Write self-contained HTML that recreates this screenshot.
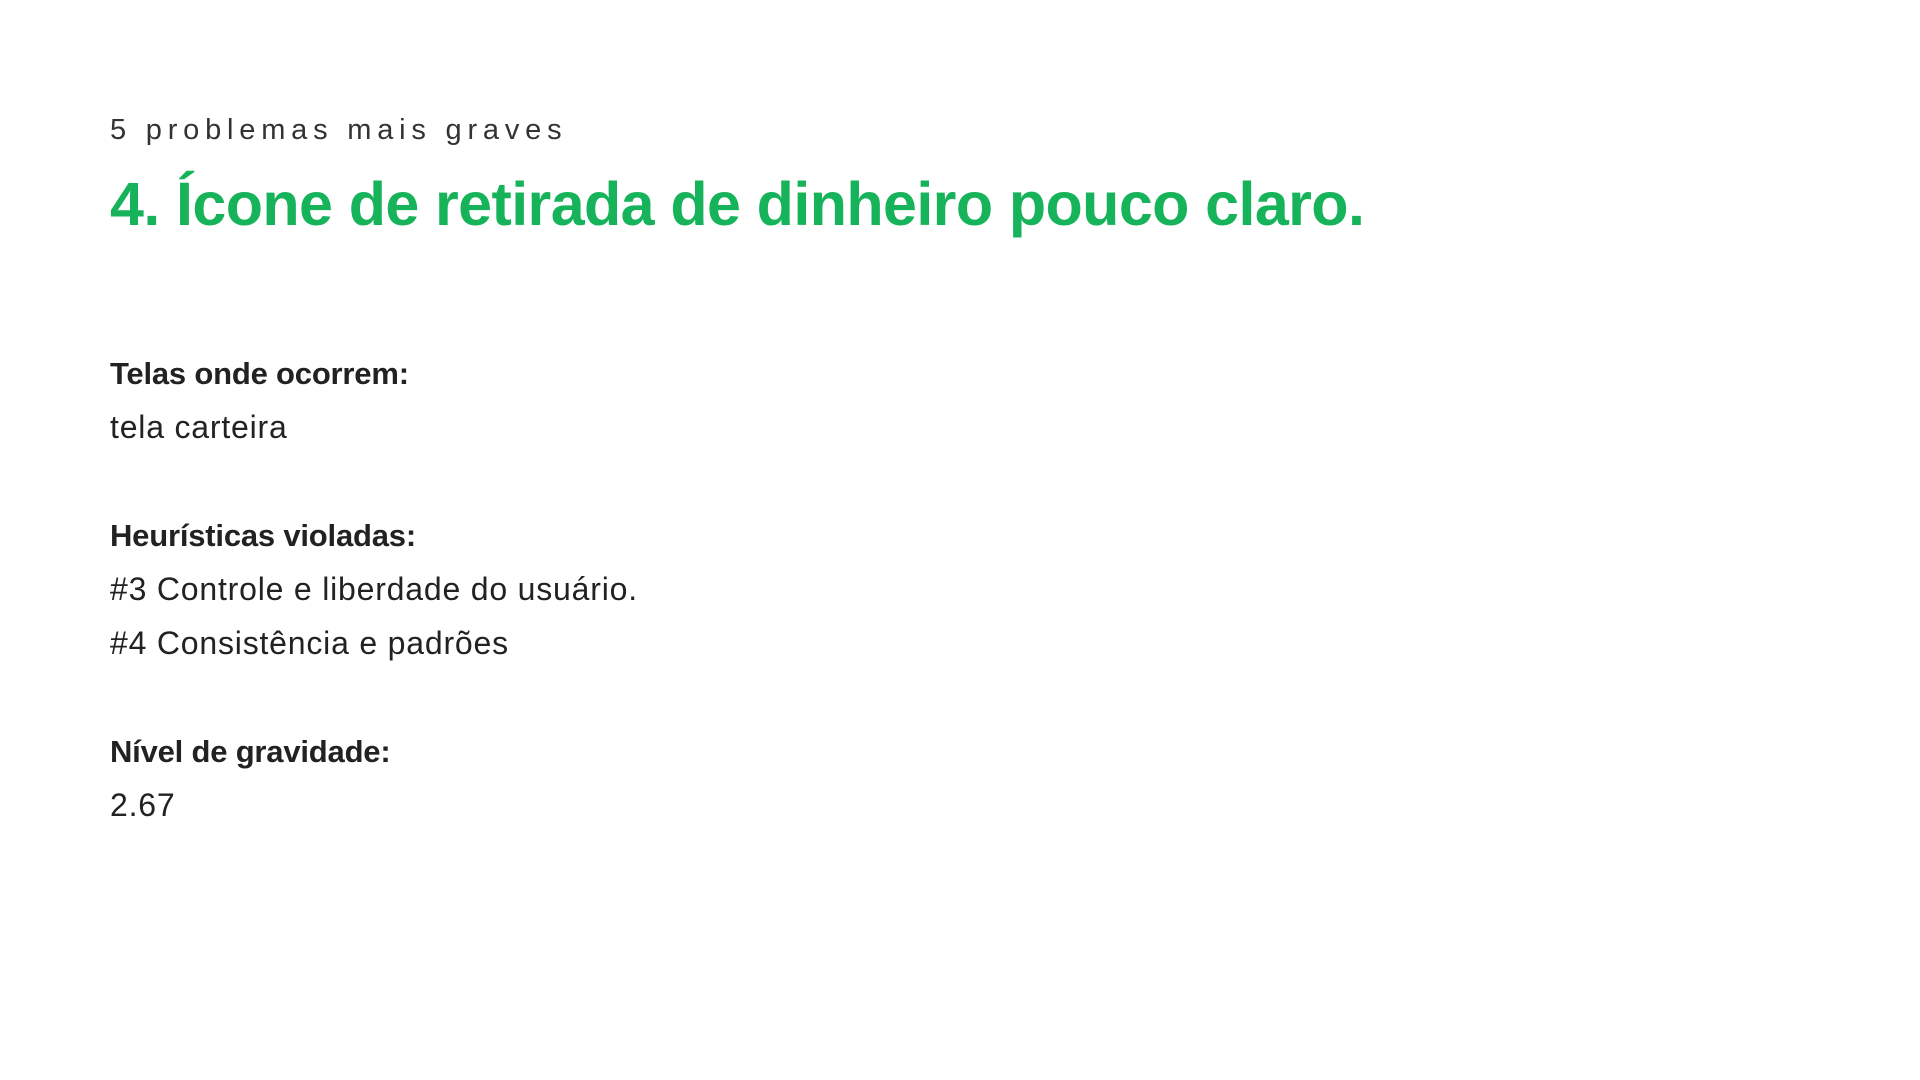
<!DOCTYPE html>
<html><head><meta charset="utf-8"><style>
html,body{margin:0;padding:0;background:#fff;width:1920px;height:1080px;overflow:hidden}
body{font-family:"Liberation Sans","DejaVu Sans",sans-serif;color:#222;position:relative}
.a{position:absolute;left:110px;white-space:nowrap}
.sub{top:114px;font-size:29px;letter-spacing:5.8px;color:#333}
.t{top:169px;font-size:61px;font-weight:bold;color:#17b35a;letter-spacing:-0.6px}
.b{font-size:31px;font-weight:bold;letter-spacing:-0.2px}
.n{font-size:32px;letter-spacing:0.8px}
</style></head><body>
<div class="a sub">5 problemas mais graves</div>
<div class="a t">4. Ícone de retirada de dinheiro pouco claro.</div>
<div class="a b" style="top:356px">Telas onde ocorrem:</div>
<div class="a n" style="top:409px">tela carteira</div>
<div class="a b" style="top:518px">Heurísticas violadas:</div>
<div class="a n" style="top:571px">#3 Controle e liberdade do usuário.</div>
<div class="a n" style="top:625px">#4 Consistência e padrões</div>
<div class="a b" style="top:734px">Nível de gravidade:</div>
<div class="a n" style="top:787px">2.67</div>
</body></html>
